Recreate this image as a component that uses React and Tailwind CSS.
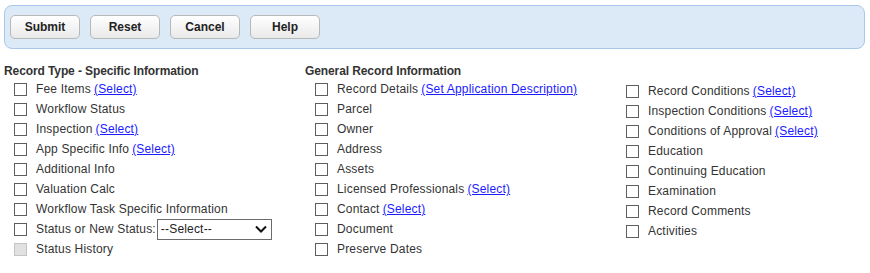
const col1 = [
  { label: "Fee Items", link: "(Select)" },
  { label: "Workflow Status" },
  { label: "Inspection", link: "(Select)" },
  { label: "App Specific Info", link: "(Select)" },
  { label: "Additional Info" },
  { label: "Valuation Calc" },
  { label: "Workflow Task Specific Information" },
  { label: "Status or New Status:", select: true },
  { label: "Status History", disabled: true },
];

const col2 = [
  { label: "Record Details", link: "(Set Application Description)" },
  { label: "Parcel" },
  { label: "Owner" },
  { label: "Address" },
  { label: "Assets" },
  { label: "Licensed Professionals", link: "(Select)" },
  { label: "Contact", link: "(Select)" },
  { label: "Document" },
  { label: "Preserve Dates" },
];

const col3 = [
  { label: "Record Conditions", link: "(Select)" },
  { label: "Inspection Conditions", link: "(Select)" },
  { label: "Conditions of Approval", link: "(Select)" },
  { label: "Education" },
  { label: "Continuing Education" },
  { label: "Examination" },
  { label: "Record Comments" },
  { label: "Activities" },
];

function Row({ item }) {
  return (
    <div className="flex items-center h-5 pl-[10px] tracking-[0.18px]">
      <span
        className={
          item.disabled
            ? "w-[13px] h-[13px] border border-[#c4c4c4] bg-[#e1e1e1] shrink-0"
            : "w-[13px] h-[13px] border border-[#5e5e5e] bg-white shrink-0"
        }
      ></span>
      <span className="ml-[9px] text-[#333]">{item.label}</span>
      {item.link && (
        <a href="#" className="ml-[3px] text-[#1b1bff] underline">
          {item.link}
        </a>
      )}
      {item.select && (
        <div className="ml-[1px] w-[115px] h-[21px] border border-[#6b6b6b] bg-white flex items-center justify-between pl-[3px] pr-[4px] text-[#222]">
          <span>--Select--</span>
          <svg width="12" height="8" viewBox="0 0 12 8">
            <path d="M1 1.5 L6 6.5 L11 1.5" fill="none" stroke="#111" strokeWidth="2" />
          </svg>
        </div>
      )}
    </div>
  );
}

function Button({ children }) {
  return (
    <button className="w-[70px] h-[24px] rounded-[5px] border border-[#b8b8b8] bg-gradient-to-b from-white to-[#e9e9e9] font-bold text-[#222] text-[12px]">
      {children}
    </button>
  );
}

export default function App() {
  return (
    <div
      className="w-[870px] h-[273px] bg-white text-[12px] leading-none"
      style={{ fontFamily: '"Liberation Sans", Arial, sans-serif' }}
    >
      {/* toolbar */}
      <div className="ml-1 mt-[5px] w-[861px] h-[44px] rounded-[8px] border border-[#a9c8ea] bg-[#dce9f7] flex items-center gap-[10px] px-[5px] pb-[1px]">
        <Button>Submit</Button>
        <Button>Reset</Button>
        <Button>Cancel</Button>
        <Button>Help</Button>
      </div>

      {/* sections */}
      <div className="flex mt-[16px] pl-1">
        <div className="w-[301px]">
          <div className="font-bold text-[#333] h-[14px] tracking-[-0.1px]">Record Type - Specific Information</div>
          <div>
            {col1.map((it) => (
              <Row key={it.label} item={it} />
            ))}
          </div>
        </div>
        <div className="w-[311px]">
          <div className="font-bold text-[#333] h-[14px] tracking-[-0.1px]">General Record Information</div>
          <div>
            {col2.map((it) => (
              <Row key={it.label} item={it} />
            ))}
          </div>
        </div>
        <div className="flex-1 pt-[16px]">
          {col3.map((it) => (
            <Row key={it.label} item={it} />
          ))}
        </div>
      </div>
    </div>
  );
}
